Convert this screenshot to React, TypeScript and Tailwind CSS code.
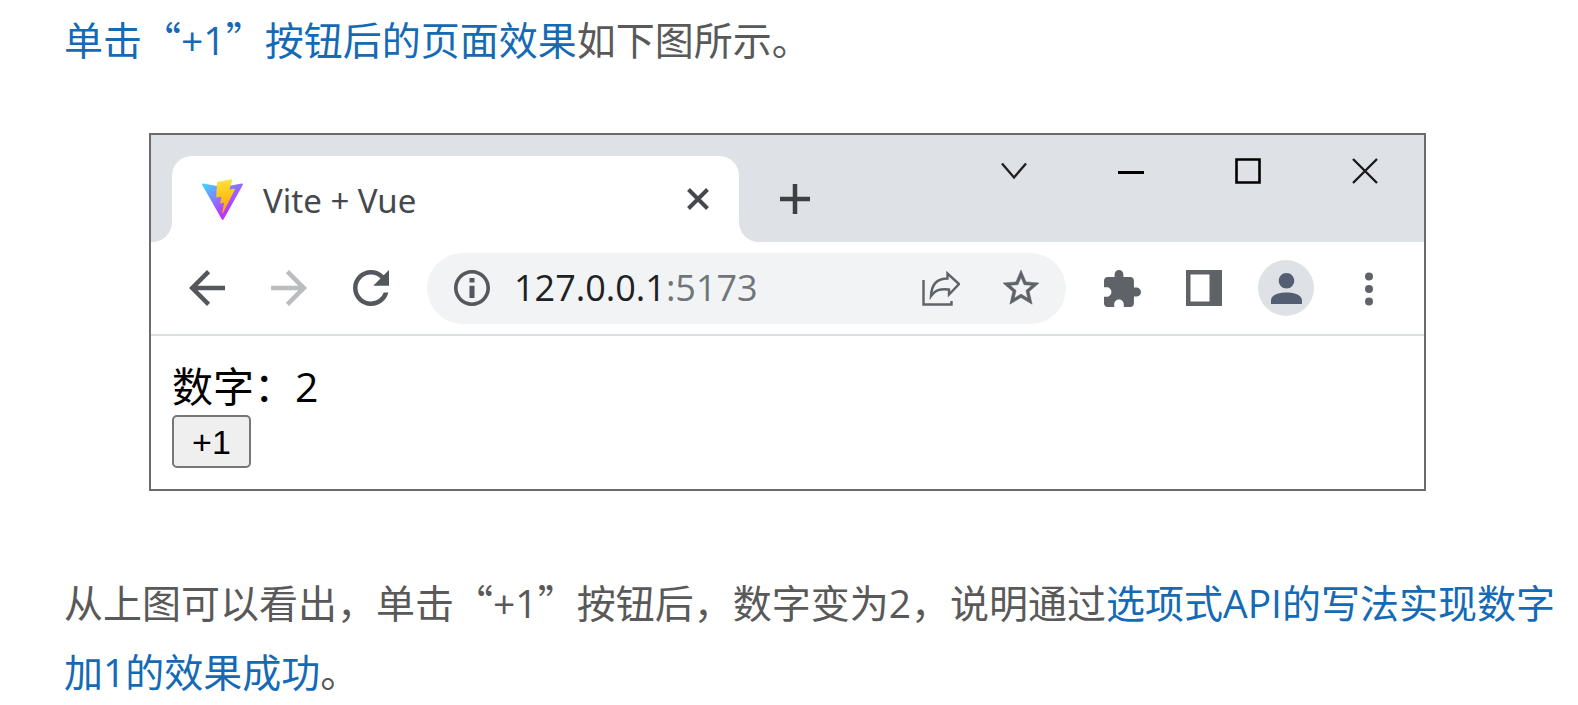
import React, { useState } from 'react';
import { clsx } from 'clsx';

interface Run {
  text: string;
  latin?: boolean;
  blue?: boolean;
}

const intro: Run[] = [
  { text: '单击“', blue: true },
  { text: '+1', latin: true, blue: true },
  { text: '”按钮后的页面效果', blue: true },
  { text: '如下图所示。' },
];

const summary: Run[] = [
  { text: '从上图可以看出，单击“' },
  { text: '+1', latin: true },
  { text: '”按钮后，数字变为' },
  { text: '2', latin: true },
  { text: '，说明通过' },
  { text: '选项式', blue: true },
  { text: 'API', latin: true, blue: true },
  { text: '的写法实现数字', blue: true },
  { text: '加', blue: true },
  { text: '1', latin: true, blue: true },
  { text: '的效果成功', blue: true },
  { text: '。' },
];

const Paragraph = ({ runs, className }: { runs: Run[]; className?: string }) => (
  <p className={className}>
    {runs.map((run, i) => (
      <span
        key={i}
        className={clsx(run.latin && "font-['Open_Sans'] leading-none", run.blue && 'text-[#146ab5]')}
      >
        {run.text}
      </span>
    ))}
  </p>
);

const ViteLogo = () => (
  <svg width="41" height="41" viewBox="0 0 256 257" className="shrink-0" aria-hidden="true">
    <defs>
      <linearGradient id="viteShape" x1="-.828%" x2="57.636%" y1="7.652%" y2="78.411%">
        <stop offset="0%" stopColor="#41D1FF" />
        <stop offset="100%" stopColor="#BD34FE" />
      </linearGradient>
      <linearGradient id="viteBolt" x1="43.376%" x2="50.316%" y1="2.242%" y2="89.03%">
        <stop offset="0%" stopColor="#FFEA83" />
        <stop offset="8.333%" stopColor="#FFDD35" />
        <stop offset="100%" stopColor="#FFA800" />
      </linearGradient>
    </defs>
    <path fill="url(#viteShape)" d="M255.153 37.938L134.897 252.976c-2.483 4.44-8.862 4.466-11.382.048L.875 37.958c-2.746-4.814 1.371-10.646 6.827-9.67l120.385 21.517a6.537 6.537 0 0 0 2.322-.004l117.867-21.483c5.438-.991 9.574 4.796 6.877 9.62Z" />
    <path fill="url(#viteBolt)" d="M185.432.063L96.44 17.501a3.268 3.268 0 0 0-2.634 3.014l-5.474 92.456a3.268 3.268 0 0 0 3.997 3.378l24.777-5.718c2.318-.535 4.413 1.507 3.936 3.838l-7.361 36.047c-.495 2.426 1.782 4.5 4.151 3.78l15.304-4.649c2.372-.72 4.652 1.36 4.15 3.788l-11.698 56.621c-.732 3.542 3.979 5.473 5.943 2.437l1.313-2.028l72.516-144.72c1.215-2.423-.88-5.186-3.54-4.672l-25.505 4.922c-2.396.462-4.435-1.77-3.759-4.114l16.646-57.705c.677-2.35-1.37-4.583-3.769-4.113Z" />
  </svg>
);

const TitleBar = () => (
  <div className="flex h-[107px] items-start bg-[#dee1e6]">
    <div className="relative mt-[21px] ml-[21px] flex h-[86px] w-[567px] shrink-0 items-center rounded-t-[20px] bg-white pr-[30px] pl-[30px]">
      {/* curved feet of the active tab */}
      <span className="absolute bottom-0 -left-5 h-5 w-5 bg-white">
        <span className="block h-full w-full rounded-br-full bg-[#dee1e6]" />
      </span>
      <span className="absolute -right-5 bottom-0 h-5 w-5 bg-white">
        <span className="block h-full w-full rounded-bl-full bg-[#dee1e6]" />
      </span>
      <ViteLogo />
      <span className="ml-5 flex-1 pt-1 font-['Noto_Sans'] text-[33px] leading-10 text-[#45484d]">Vite + Vue</span>
      <button aria-label="关闭标签页">
        <svg width="22" height="22" viewBox="0 0 22 22" fill="none" stroke="#45494d" strokeWidth="4">
          <path d="M1.5 1.5l19 19M20.5 1.5l-19 19" />
        </svg>
      </button>
    </div>
    <button aria-label="新标签页" className="mt-[49px] ml-[41px]">
      <svg width="30" height="30" viewBox="0 0 30 30" fill="none" stroke="#3c4043" strokeWidth="4.5">
        <path d="M15 0v30M0 15h30" />
      </svg>
    </button>
    <div className="mt-[23px] ml-auto flex gap-[91px] pr-[46px]">
      <button aria-label="搜索标签页">
        <svg width="26" height="26" viewBox="0 0 26 26" fill="none" stroke="#222" strokeWidth="2.4">
          <path d="M1 5.5l12 14 12-14" />
        </svg>
      </button>
      <button aria-label="最小化">
        <svg width="26" height="26" viewBox="0 0 26 26" fill="none" stroke="#000" strokeWidth="3">
          <path d="M0 14.5h26" />
        </svg>
      </button>
      <button aria-label="最大化">
        <svg width="26" height="26" viewBox="0 0 26 26" fill="none" stroke="#000" strokeWidth="2.6">
          <path d="M1.5 1.5h23v23h-23z" />
        </svg>
      </button>
      <button aria-label="关闭">
        <svg width="26" height="26" viewBox="0 0 26 26" fill="none" stroke="#1a1a1a" strokeWidth="2.4">
          <path d="M1 1l24 24M25 1L1 25" />
        </svg>
      </button>
    </div>
  </div>
);

const Toolbar = () => (
  <div className="flex h-[94px] items-center border-b-2 border-[#dcdfe1] bg-white pr-[45px] pl-[38px] text-[#5f6368]">
    <div className="mr-[38px] flex gap-[46px]">
      <button aria-label="后退">
        <svg width="36" height="36" viewBox="4 4 16 16" fill="#54585d">
          <path d="M20 11H7.83l5.59-5.59L12 4l-8 8 8 8 1.41-1.41L7.83 13H20v-2z" />
        </svg>
      </button>
      <button aria-label="前进">
        <svg width="36" height="36" viewBox="4 4 16 16" fill="#babcbe">
          <path d="M12 4l-1.41 1.41L16.17 11H4v2h12.17l-5.58 5.59L12 20l8-8z" />
        </svg>
      </button>
      <button aria-label="重新加载">
        <svg width="36" height="36" viewBox="4 4 16 16" fill="#54585d">
          <path d="M17.65 6.35A7.958 7.958 0 0 0 12 4c-4.42 0-7.99 3.58-7.99 8s3.57 8 7.99 8c3.73 0 6.84-2.55 7.73-6h-2.08A5.99 5.99 0 0 1 12 18c-3.31 0-6-2.69-6-6s2.69-6 6-6c1.66 0 3.14.69 4.22 1.78L13 11h7V4l-2.35 2.35z" />
        </svg>
      </button>
    </div>
    <div className="flex h-[71px] flex-1 items-center rounded-full bg-[#f1f3f4] pr-[27px] pl-[27px]">
      <svg width="36" height="36" viewBox="2 2 20 20" fill="#54585d" className="shrink-0">
        <path d="M12 2C6.48 2 2 6.48 2 12s4.48 10 10 10 10-4.48 10-10S17.52 2 12 2zm0 18c-4.41 0-8-3.59-8-8s3.59-8 8-8 8 3.59 8 8-3.59 8-8 8z" />
        <path d="M10.6 6.5h2.8v2.5h-2.8zM10.6 10.7h2.8v6.8h-2.8z" />
      </svg>
      <span className="ml-6 flex-1 font-['Open_Sans'] text-[36px] leading-10 text-[#202124]">
        127.0.0.1<span className="text-[#70757a]">:5173</span>
      </span>
      <button aria-label="分享此页" className="mr-[43px]">
        <svg width="38" height="36" viewBox="0 0 38 36" fill="none" stroke="#5f6368" strokeWidth="2.4">
          <path d="M1.5 10v24.5h28V31" />
          <path d="M9 26C9.5 15 15 8.5 25.5 8.5V3.5L37 14 27 24.5V19.5C18 18.5 13 20 9 26Z" />
        </svg>
      </button>
      <button aria-label="添加书签">
        <svg width="36" height="36" viewBox="2 2 20 20" fill="currentColor" stroke="currentColor" strokeWidth=".3">
          <path d="M22 9.24l-7.19-.62L12 2 9.19 8.63 2 9.24l5.46 4.73L5.82 21 12 17.27 18.18 21l-1.63-7.03L22 9.24zM12 15.4l-3.76 2.27 1-4.28-3.32-2.88 4.38-.38L12 6.1l1.71 4.04 4.38.38-3.32 2.88 1 4.28L12 15.4z" />
        </svg>
      </button>
    </div>
    <div className="ml-[38px] flex items-center">
      <button aria-label="扩展程序" className="mr-[45px]">
        <svg width="37" height="37" viewBox="2 1 21 21" fill="currentColor">
          <path d="M20.5 11H19V7c0-1.1-.9-2-2-2h-4V3.5a2.5 2.5 0 0 0-5 0V5H4c-1.1 0-1.99.9-1.99 2v3.8H3.5c1.49 0 2.7 1.21 2.7 2.7s-1.21 2.7-2.7 2.7H2V20c0 1.1.9 2 2 2h3.8v-1.5c0-1.49 1.21-2.7 2.7-2.7s2.7 1.21 2.7 2.7V22H17c1.1 0 2-.9 2-2v-4h1.5a2.5 2.5 0 0 0 0-5z" />
        </svg>
      </button>
      <button aria-label="侧边栏" className="mr-9">
        <svg width="36" height="36" viewBox="0 0 36 36" fill="currentColor">
          <path fillRule="evenodd" d="M0 0h36v36H0zM4.5 4.5v27h19v-27z" />
        </svg>
      </button>
      <button aria-label="个人资料" className="mr-[45px] flex h-14 w-14 items-center justify-center rounded-full bg-[#dee1e6]">
        <svg width="31" height="31" viewBox="4 4 16 16" fill="#535e72">
          <path d="M12 12c2.21 0 4-1.79 4-4s-1.79-4-4-4-4 1.79-4 4 1.79 4 4 4zm0 2c-2.67 0-8 .8-8 4v2h16v-2c0-3.2-5.33-4-8-4z" />
        </svg>
      </button>
      <button aria-label="更多">
        <svg width="20" height="36" viewBox="0 0 20 36" fill="currentColor">
          <circle cx="10" cy="6.5" r="4" />
          <circle cx="10" cy="19" r="4" />
          <circle cx="10" cy="31.5" r="4" />
        </svg>
      </button>
    </div>
  </div>
);

const Counter = () => {
  const [count, setCount] = useState(2);

  return (
    <div className="flex flex-col items-start bg-white px-[21px] pt-[18px] pb-[21px] text-black">
      <p className="text-[41px] leading-[61px]">
        数字：<span className="font-['Open_Sans'] leading-none">{count}</span>
      </p>
      <button
        onClick={() => setCount(count + 1)}
        className="h-[53px] w-[79px] rounded-[5px] border-2 border-[#767676] bg-[#efefef] font-['Liberation_Sans'] text-[34px] leading-10"
      >
        +1
      </button>
    </div>
  );
};

export default function App() {
  return (
    <main
      lang="zh-CN"
      className="bg-white pt-1 pr-4 pl-16 font-['Noto_Sans_CJK_SC',sans-serif] text-[39px] leading-[69px] text-[#595959]"
    >
      <Paragraph runs={intro} />
      <section className="mt-[60px] mr-[136px] ml-[85px] border-2 border-[#6b6b6d]">
        <TitleBar />
        <Toolbar />
        <Counter />
      </section>
      <Paragraph runs={summary} className="mt-[76px]" />
    </main>
  );
}
